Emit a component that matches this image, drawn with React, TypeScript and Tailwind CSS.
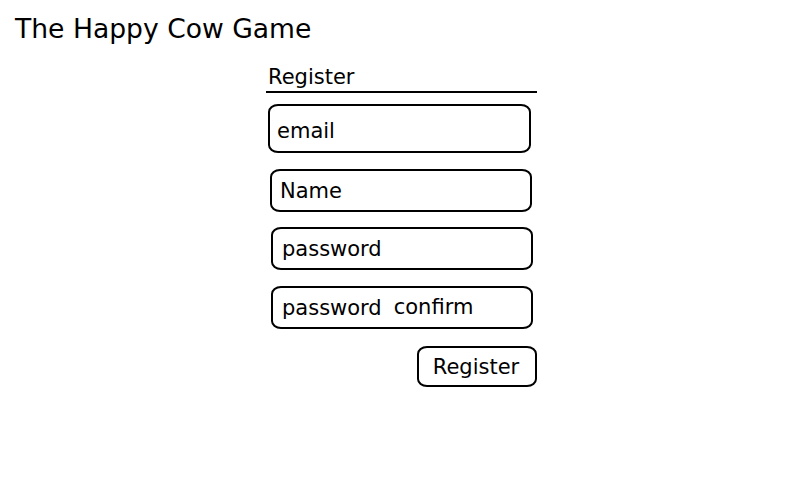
const font = "font-['DejaVu_Sans',sans-serif]";

function Field({ className, children }: { className: string; children: React.ReactNode }) {
  return (
    <div
      className={`flex items-center border-2 border-black rounded-[10px/8px] text-[21px] leading-none text-black ${className}`}
    >
      {children}
    </div>
  );
}

export default function App() {
  return (
    <div className={`w-[798px] h-[487px] bg-white text-black ${font}`}>
      <h1 className="pt-[16px] pl-[15px] text-[26.6px] leading-[26px] font-normal">The Happy Cow Game</h1>

      <div className="ml-[266px] w-[271px] flex flex-col mt-[25px]">
        <div className="pl-[2px] pb-[3px] text-[21px] leading-none border-b-2 border-black">Register</div>

        <Field className="mt-[11px] ml-[2px] w-[263px] h-[49px] pl-[7px] pt-[6px]">email</Field>
        <Field className="mt-[16px] ml-[4px] w-[262px] h-[43px] pl-[8px] pt-[1px]">Name</Field>
        <Field className="mt-[15px] ml-[5px] w-[262px] h-[43px] pl-[9px] pt-[1px]">password</Field>
        <Field className="mt-[16px] ml-[5px] w-[262px] h-[43px] pl-[9px] pt-[1px]">
          <span>password</span>
          <span className="ml-[12px] -translate-y-px">confirm</span>
        </Field>

        <div className="mt-[17px] flex justify-end">
          <button className="w-[120px] h-[41px] pt-[1px] pr-[2px] flex items-center justify-center border-2 border-black rounded-[10px/8px] text-[21px] leading-none bg-white">
            Register
          </button>
        </div>
      </div>
    </div>
  );
}
